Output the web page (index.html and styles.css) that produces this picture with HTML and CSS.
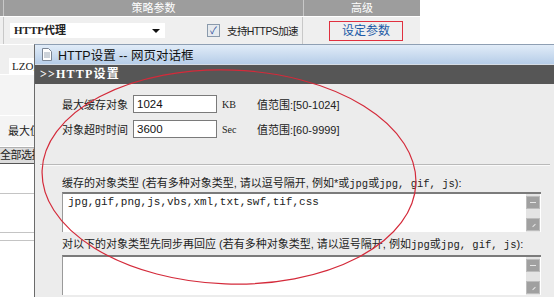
FILE: index.html
```html
<!DOCTYPE html>
<html lang="zh-cn">

<head>
    <meta charset="utf-8" />
    <title>HTTP设置</title>
    <link rel="stylesheet" href="styles.css">
</head>

<body>
    <div class="policy">
        <div class="policy-head">
            <div class="col-edge"></div>
            <div class="col-main">策略参数</div>
            <div class="col-adv">高级</div>
        </div>
        <div class="policy-row row-proxy">
            <div class="col-edge"></div>
            <div class="col-main">
                <div class="select">HTTP代理<span class="caret"></span></div>
                <span class="check">&#10003;</span>
                <span class="check-label">支持HTTPS加速</span>
            </div>
            <div class="col-adv">
                <a class="adv-link" href="#">设定参数</a>
            </div>
        </div>
        <div class="policy-row row-lzo">
            <div class="lzo">LZO压</div>
        </div>
        <div class="policy-row row-blank"></div>
        <div class="policy-row row-max">最大值</div>
        <div class="select-all">全部选择</div>
        <div class="list-row"></div>
        <div class="list-row tall"></div>
        <div class="list-row short"></div>
    </div>

    <div class="dialog">
        <div class="dialog-title">
            <svg class="page-icon" width="10" height="13" viewBox="0 0 10 13">
                <path d="M0.5 0.5h6l3 3v9h-9z" fill="#fff" stroke="#7a8594" />
                <path d="M2 5h6M2 7h6M2 9h6" stroke="#9aa6b4" />
            </svg>
            <span>HTTP设置 -- 网页对话框</span>
        </div>
        <div class="dialog-bar">&gt;&gt;HTTP设置</div>
        <div class="dialog-body">
            <div class="field">
                <label>最大缓存对象</label>
                <input class="num" type="text" value="1024">
                <span class="unit">KB</span>
                <span class="range">值范围:[50-1024]</span>
            </div>
            <div class="field">
                <label>对象超时时间</label>
                <input class="num" type="text" value="3600">
                <span class="unit">Sec</span>
                <span class="range">值范围:[60-9999]</span>
            </div>
            <div class="sep"></div>
            <div class="ta-label first">缓存的对象类型 (若有多种对象类型, 请以逗号隔开, 例如*或<span class="mono">jpg</span>或<span class="mono">jpg, gif, js</span>):</div>
            <div class="ta">
                <div class="ta-text">jpg,gif,png,js,vbs,xml,txt,swf,tif,css</div>
                <div class="ta-scroll"><span class="sb-btn"></span><span class="sb-btn grip"></span></div>
            </div>
            <div class="ta-label">对以下的对象类型先同步再回应 (若有多种对象类型, 请以逗号隔开, 例如<span class="mono">jpg</span>或<span class="mono">jpg, gif, js</span>):</div>
            <div class="ta">
                <div class="ta-text"></div>
                <div class="ta-scroll"><span class="sb-btn"></span><span class="sb-btn grip"></span></div>
            </div>
        </div>
    </div>

    <svg class="mark" width="554" height="297" viewBox="0 0 554 297">
        <ellipse cx="229" cy="177" rx="187" ry="107" transform="rotate(2 229 177)" fill="none" stroke="#d42a3a" stroke-width="1.2" />
    </svg>
</body>

</html>
```

FILE: styles.css
```css
body {
    margin: 0;
    width: 554px;
    height: 297px;
    overflow: hidden;
    position: relative;
    background: #fff;
    font-family: 'Liberation Sans', 'Noto Sans CJK SC', sans-serif;
    font-size: 11px;
    color: #222;
}

/* background page */
.policy {
    width: 420px;
}

.policy-head {
    display: flex;
    height: 16px;
    line-height: 16px;
    background: #9d9d9d;
    color: #fff;
    border-bottom: 1px solid #fff;
}

.col-edge {
    width: 3px;
    border-right: 1px solid #c8c8c8;
}

.col-main {
    width: 299px;
    border-right: 1px solid #c8c8c8;
}

.policy-head .col-main,
.col-adv {
    text-align: center;
}

.col-adv {
    flex: 1;
}

.policy-row {
    background: #efefef;
    border-bottom: 1px solid #fff;
}

.row-proxy {
    display: flex;
    height: 27px;
}

.row-proxy .col-main {
    display: flex;
    align-items: center;
    padding-left: 6px;
    box-sizing: border-box;
    white-space: nowrap;
}

.select {
    position: relative;
    flex: none;
    width: 155px;
    height: 15px;
    line-height: 15px;
    background: #fff;
    font-family: 'Liberation Serif', 'Noto Sans CJK SC', serif;
    font-weight: bold;
    font-size: 11px;
    padding-left: 4px;
    box-sizing: border-box;
}

.caret {
    position: absolute;
    right: 5px;
    top: 6px;
    border-left: 4px solid transparent;
    border-right: 4px solid transparent;
    border-top: 4px solid #111;
}

.check {
    flex: none;
    width: 11px;
    height: 11px;
    margin-left: 42px;
    border: 1px solid #8a9aac;
    background: #e6eaee;
    color: #2a4f9a;
    font-size: 10px;
    line-height: 11px;
    text-align: center;
}

.check-label {
    margin-left: 7px;
    font-size: 10.5px;
    letter-spacing: -0.6px;
}

.row-proxy .col-adv {
    display: flex;
    align-items: center;
    justify-content: center;
}

.adv-link {
    display: block;
    width: 74px;
    height: 20px;
    line-height: 18px;
    margin-left: 9px;
    box-sizing: border-box;
    border: 1px solid #e0303f;
    color: #1b5aa6;
    font-size: 12px;
    text-decoration: none;
    text-align: center;
}

.row-lzo {
    height: 30px;
    padding: 13px 0 0 9px;
    box-sizing: border-box;
}

.lzo {
    width: 40px;
    height: 16px;
    line-height: 16px;
    background: #fff;
    padding-left: 3px;
    font-family: 'Liberation Serif', 'Noto Sans CJK SC', serif;
}

.row-blank {
    height: 40px;
    background: #f4f4f4;
}

.row-max {
    height: 30px;
    line-height: 30px;
    padding-left: 8px;
    background: #f4f4f4;
}

.select-all {
    height: 15px;
    line-height: 15px;
    background: #dcdcdc;
    border-top: 1px solid #b0b0b0;
    border-bottom: 1px solid #555;
    font-size: 11px;
    letter-spacing: -0.5px;
    white-space: nowrap;
}

.list-row {
    height: 29px;
    border-bottom: 1px solid #c4c4c4;
}

.list-row.tall {
    height: 38px;
}

.list-row.short {
    height: 7px;
}

/* dialog window */
.dialog {
    position: absolute;
    left: 34px;
    top: 44px;
    width: 520px;
    height: 260px;
    background: #ececec;
    border-left: 1px solid #6a6a6a;
    border-top: 1px solid #8e9fb3;
}

.dialog-title {
    display: flex;
    align-items: center;
    height: 19px;
    padding-left: 7px;
    background: linear-gradient(#e1ecf8, #b6cde8);
    border-bottom: 1px solid #d6dde6;
    font-size: 12.5px;
    color: #111;
}

.page-icon {
    margin-right: 6px;
}

.dialog-bar {
    height: 19px;
    line-height: 19px;
    padding-left: 5px;
    background: #565656;
    color: #fff;
    font-family: 'Liberation Serif', 'Noto Sans CJK SC', serif;
    font-weight: bold;
    font-size: 12px;
    letter-spacing: 1.2px;
}

.dialog-body {
    padding: 11px 14px 0 27px;
}

.field {
    display: flex;
    align-items: center;
    height: 18px;
    margin-bottom: 7px;
}

.field label {
    width: 71px;
    font-size: 11px;
}

input.num {
    width: 84px;
    height: 18px;
    box-sizing: border-box;
    border: 1px solid #7a7a7a;
    padding: 0 3px;
    font-family: 'Liberation Sans', sans-serif;
    font-size: 11.5px;
    color: #111;
}

.unit {
    width: 35px;
    padding-left: 5px;
    font-family: 'Liberation Serif', serif;
    font-size: 10px;
}

.range {
    font-size: 11px;
}

.sep {
    margin: 26px -9px 0 -22px;
    border-top: 1px solid #b9b9b9;
    border-bottom: 1px solid #fafafa;
}

.ta-label {
    height: 16px;
    line-height: 16px;
    margin: 4px 0 3px;
    font-size: 11px;
}

.ta-label.first {
    margin: 9px 0 1px;
}

.mono {
    font-family: 'Liberation Mono', monospace;
    font-size: 10.5px;
}

.ta {
    display: flex;
    height: 40px;
    box-sizing: border-box;
    background: #fff;
    border-top: 2px solid #7b7b7b;
    border-left: 1px solid #9a9a9a;
}

.ta-text {
    flex: 1;
    padding: 2px 5px;
    font-family: 'Liberation Mono', monospace;
    font-size: 11px;
    color: #222;
}

.ta-scroll {
    display: flex;
    flex-direction: column;
    justify-content: space-between;
    width: 14px;
    margin-right: 1px;
    padding: 2px 0 1px;
    background: #e4e4e4;
}

.sb-btn {
    position: relative;
    height: 13px;
    background: #a0a0a0;
    border: 1px solid #bdbdbd;
    box-sizing: border-box;
}

.sb-btn::after {
    content: '';
    position: absolute;
    left: 3px;
    top: 5px;
    width: 6px;
    border-top: 1px solid #e6e6e6;
}

.sb-btn.grip::after {
    left: 5px;
    top: 6px;
    width: 4px;
    transform: rotate(-45deg);
}

.mark {
    position: absolute;
    left: 0;
    top: 0;
    pointer-events: none;
}
```
